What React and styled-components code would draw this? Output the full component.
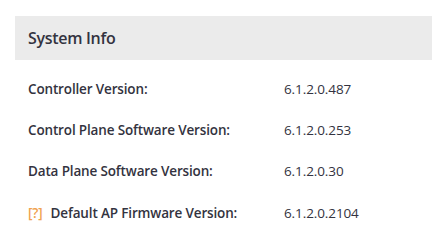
import React from "react";
import styled, { createGlobalStyle } from "styled-components";

const Global = createGlobalStyle`
  html, body { margin: 0; padding: 0; background: #fff; }
  body { font-family: "Open Sans", "Liberation Sans", sans-serif; color: #333340; }
`;

const Panel = styled.section`
  padding: 16px 0 0 15px;
`;

const Header = styled.div`
  height: 44px;
  background: #ebebeb;
  display: flex;
  align-items: center;
  padding-left: 13px;
`;

const Title = styled.h2`
  margin: 0;
  font-size: 16px;
  font-weight: 600;
  letter-spacing: -0.3px;
  color: #333340;
`;

const List = styled.dl`
  margin: 8px 0 0;
  padding: 0 0 0 13px;
`;

const Row = styled.div`
  display: grid;
  grid-template-columns: 256px 1fr;
  align-items: center;
  height: 41.3px;
`;

const Label = styled.dt`
  font-size: 13.5px;
  font-weight: 600;
  letter-spacing: -0.15px;
  display: flex;
  align-items: center;
  gap: 8px;
`;

const Help = styled.span`
  color: #f0a24e;
  font-weight: 600;
`;

const Value = styled.dd`
  margin: 0;
  font-size: 13.5px;
  font-weight: 400;
  letter-spacing: -0.1px;
`;

const rows = [
  { label: "Controller Version:", value: "6.1.2.0.487" },
  { label: "Control Plane Software Version:", value: "6.1.2.0.253" },
  { label: "Data Plane Software Version:", value: "6.1.2.0.30" },
  { label: "Default AP Firmware Version:", value: "6.1.2.0.2104", help: true },
];

export default function App() {
  return (
    <>
      <Global />
      <Panel>
        <Header>
          <Title>System Info</Title>
        </Header>
        <List>
          {rows.map((r) => (
            <Row key={r.label}>
              <Label>
                {r.help && <Help>[?]</Help>}
                {r.label}
              </Label>
              <Value>{r.value}</Value>
            </Row>
          ))}
        </List>
      </Panel>
    </>
  );
}
